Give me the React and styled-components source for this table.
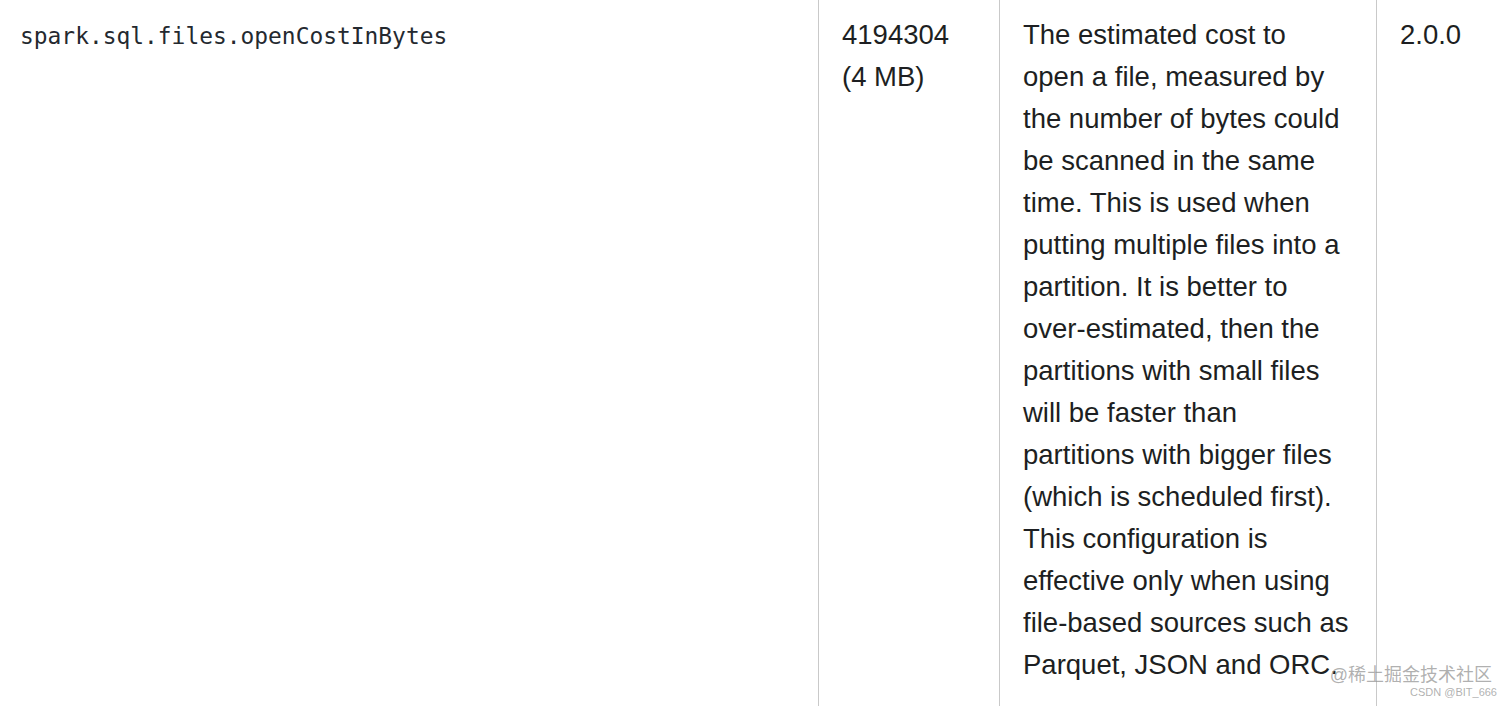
import styled, { createGlobalStyle } from "styled-components";

const GlobalStyle = createGlobalStyle`
  html, body {
    margin: 0;
    padding: 0;
    background: #ffffff;
    overflow: hidden;
  }
`;

const Page = styled.div`
  position: relative;
  width: 1512px;
  height: 706px;
  overflow: hidden;
  font-family: "Liberation Sans", Arial, sans-serif;
  color: #1d1f22;
`;

const Table = styled.div`
  display: grid;
  grid-template-columns: 818px 181px 377px 160px;
  height: 100%;
`;

const Cell = styled.div`
  padding: 14px 23px 0 ${(p) => (p.$first ? "20px" : "23px")};
  border-left: ${(p) => (p.$first ? "none" : "1px solid #c9c9c9")};
  font-size: 27.5px;
  line-height: 42px;
`;

const Code = styled.code`
  font-family: "DejaVu Sans Mono", "Liberation Mono", monospace;
  font-size: 22.9px;
  color: #24292f;
`;

const Watermark = styled.div`
  position: absolute;
  right: 20px;
  bottom: 8px;
  display: flex;
  flex-direction: column;
  align-items: flex-end;
  color: rgba(150, 150, 150, 0.75);
  font-family: "Liberation Sans", "Noto Sans CJK SC", sans-serif;
  line-height: 1.1;
`;

const MarkMain = styled.span`
  font-size: 18px;
`;

const MarkSub = styled.span`
  font-size: 11px;
  margin-right: -5px;
`;

export default function App() {
  return (
    <Page>
      <GlobalStyle />
      <Table>
        <Cell $first>
          <Code>spark.sql.files.openCostInBytes</Code>
        </Cell>
        <Cell>4194304 (4 MB)</Cell>
        <Cell>
          The estimated cost to open a file, measured by the number of bytes
          could be scanned in the same time. This is used when putting multiple
          files into a partition. It is better to over-estimated, then the
          partitions with small files will be faster than partitions with bigger
          files (which is scheduled first). This configuration is effective only
          when using file-based sources such as Parquet, JSON and ORC.
        </Cell>
        <Cell>2.0.0</Cell>
      </Table>
      <Watermark>
        <MarkMain>@稀土掘金技术社区</MarkMain>
        <MarkSub>CSDN @BIT_666</MarkSub>
      </Watermark>
    </Page>
  );
}
